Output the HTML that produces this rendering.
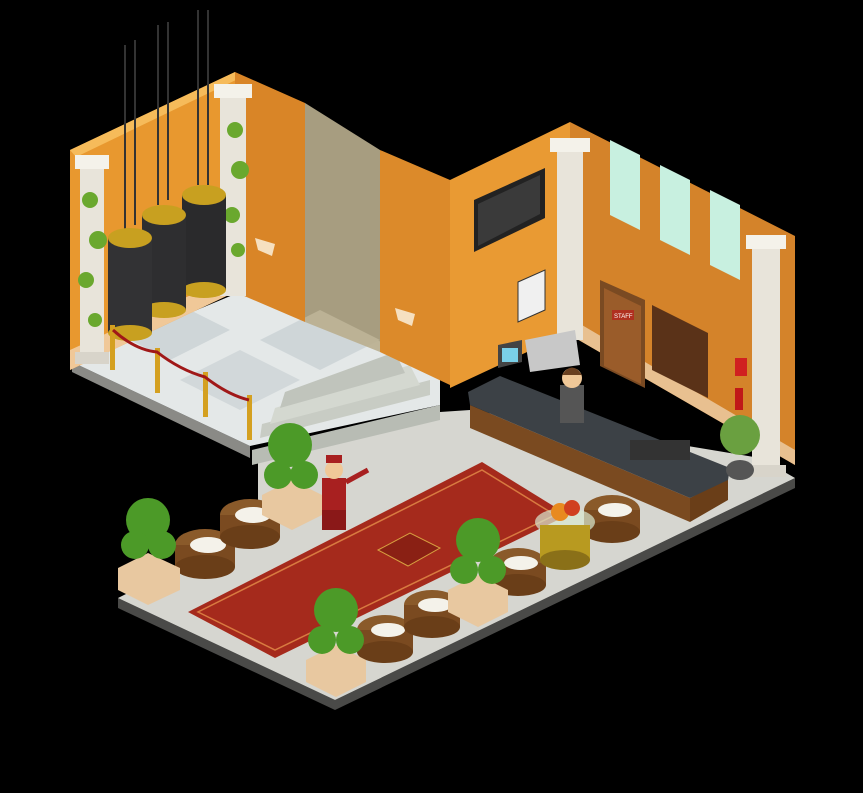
<!DOCTYPE html>
<html><head><meta charset="utf-8"><style>
html,body{margin:0;padding:0;background:#000;width:863px;height:793px;overflow:hidden}
svg{display:block}
</style></head><body>
<svg width="863" height="793" viewBox="0 0 863 793" xmlns="http://www.w3.org/2000/svg">
<rect width="863" height="793" fill="#000"/>
<!-- main floor base edge -->
<polygon points="118,598 335,700 795,478 795,488 335,710 118,608" fill="#4a4a48"/>
<!-- main floor -->
<polygon points="118,598 335,700 795,478 760,458 470,410 440,412 258,458 258,528" fill="#d6d6d0"/>
<!-- left platform side -->
<polygon points="72,362 250,446 250,458 72,372" fill="#8a8a86"/>
<!-- left platform floor -->
<polygon points="72,362 250,446 440,405 440,360 305,318 240,292" fill="#e4e8e8"/>
<polygon points="110,330 170,360 230,330 170,300" fill="#cfd6d8"/>
<polygon points="180,380 240,410 300,380 240,350" fill="#d2d8da"/>
<polygon points="260,340 320,370 380,340 320,310" fill="#cfd6d8"/>
<!-- stairs -->
<polygon points="252,450 440,405 440,420 252,465" fill="#b8bcb4"/>
<polygon points="260,438 430,395 430,380 262,424" fill="#c8ccc4"/>
<polygon points="270,424 420,385 410,365 275,408" fill="#d4d8d0"/>
<polygon points="280,408 405,373 395,352 285,392" fill="#c0c4bc"/>
<!-- walls -->
<polygon points="70,150 235,72 235,292 70,370" fill="#e8982f"/>
<polygon points="70,150 235,72 240,78 76,157" fill="#f6bb5a"/>
<polygon points="235,72 305,103 305,322 235,292" fill="#d98527"/>
<polygon points="305,103 380,150 380,352 305,322" fill="#b9ae8e" opacity="0.9"/>
<polygon points="380,150 450,180 450,385 380,352" fill="#dc8a2a"/>
<polygon points="450,180 570,122 570,332 450,388" fill="#e99a33"/>
<polygon points="570,122 795,236 795,465 570,335" fill="#d4832a"/>
<!-- wall base trim -->
<polygon points="70,350 235,275 235,292 70,370" fill="#f0c898"/>
<polygon points="570,318 795,450 795,465 570,335" fill="#e8c090"/>
<!-- windows on right wall -->
<polygon points="610,140 640,155 640,230 610,215" fill="#c8f0e0"/>
<polygon points="660,165 690,180 690,255 660,240" fill="#c8f0e0"/>
<polygon points="710,190 740,205 740,280 710,265" fill="#c8f0e0"/>
<!-- TV -->
<polygon points="474,200 545,168 545,218 474,252" fill="#222"/>
<polygon points="478,204 540,175 540,214 478,246" fill="#3a3a3a"/>
<!-- certificate -->
<polygon points="518,282 545,270 545,310 518,322" fill="#f0f0f0" stroke="#333"/>
<!-- door -->
<polygon points="600,280 645,300 645,388 600,366" fill="#7a4a22"/>
<polygon points="604,288 641,306 641,384 604,366" fill="#9a5c2a"/>
<rect x="612" y="310" width="22" height="10" fill="#b03020"/>
<text x="614" y="318" font-family="Liberation Sans, sans-serif" font-size="6" fill="#fff">STAFF</text>
<!-- key board -->
<polygon points="652,305 708,333 708,398 652,370" fill="#5a3218"/>
<!-- sign -->
<rect x="735" y="358" width="12" height="18" fill="#d02020"/>
<!-- lamps -->
<polygon points="255,238 275,244 272,256 258,250" fill="#f6e0c0"/>
<polygon points="395,308 415,314 412,326 398,320" fill="#f6e0c0"/>
<!-- pillars -->
<rect x="80" y="168" width="24" height="195" fill="#e8e4da"/>
<rect x="75" y="155" width="34" height="14" fill="#f4f2ea"/>
<rect x="75" y="352" width="34" height="12" fill="#d8d4ca"/>
<rect x="220" y="96" width="26" height="200" fill="#e8e4da"/>
<rect x="214" y="84" width="38" height="14" fill="#f4f2ea"/>
<rect x="557" y="150" width="26" height="190" fill="#e8e4da"/>
<rect x="550" y="138" width="40" height="14" fill="#f4f2ea"/>
<rect x="752" y="248" width="28" height="222" fill="#e8e4da"/>
<rect x="746" y="235" width="40" height="14" fill="#f4f2ea"/>
<rect x="746" y="465" width="40" height="12" fill="#d8d4ca"/>
<!-- ivy -->
<g fill="#6aa82e">
<circle cx="90" cy="200" r="8"/><circle cx="98" cy="240" r="9"/><circle cx="86" cy="280" r="8"/><circle cx="95" cy="320" r="7"/>
<circle cx="235" cy="130" r="8"/><circle cx="240" cy="170" r="9"/><circle cx="232" cy="215" r="8"/><circle cx="238" cy="250" r="7"/>
</g>
<!-- chains -->
<g stroke="#333" stroke-width="2">
<line x1="125" y1="45" x2="125" y2="230"/><line x1="135" y1="40" x2="135" y2="225"/>
<line x1="158" y1="25" x2="158" y2="205"/><line x1="168" y1="22" x2="168" y2="200"/>
<line x1="198" y1="10" x2="198" y2="185"/><line x1="208" y1="10" x2="208" y2="185"/>
</g>
<!-- elevators -->
<g>
<rect x="182" y="195" width="44" height="95" fill="#2a2a2c"/><ellipse cx="204" cy="195" rx="22" ry="10" fill="#c8a020"/><ellipse cx="204" cy="290" rx="22" ry="8" fill="#c8a020"/>
<rect x="142" y="215" width="44" height="95" fill="#2e2e30"/><ellipse cx="164" cy="215" rx="22" ry="10" fill="#c8a020"/><ellipse cx="164" cy="310" rx="22" ry="8" fill="#c8a020"/>
<rect x="108" y="238" width="44" height="95" fill="#323234"/><ellipse cx="130" cy="238" rx="22" ry="10" fill="#c8a020"/><ellipse cx="130" cy="333" rx="22" ry="8" fill="#c8a020"/>
</g>
<!-- rope posts -->
<g fill="#d4a020"><rect x="110" y="325" width="5" height="45"/><rect x="155" y="348" width="5" height="45"/><rect x="203" y="372" width="5" height="45"/><rect x="247" y="395" width="5" height="45"/></g>
<path d="M113,330 Q135,350 157,352 Q180,370 205,377 Q228,395 249,400" stroke="#a01818" stroke-width="3" fill="none"/>
<!-- reception desk -->
<polygon points="470,405 690,498 690,522 470,428" fill="#7a4a20"/>
<polygon points="690,498 728,478 728,500 690,522" fill="#6a3e18"/>
<polygon points="468,392 500,376 730,468 728,480 690,498 470,405" fill="#3c4146"/>
<!-- printer & monitor -->
<polygon points="525,340 575,330 580,365 530,372" fill="#c8c8c8"/>
<polygon points="498,345 522,340 522,362 498,368" fill="#444"/>
<rect x="502" y="348" width="16" height="14" fill="#7ad0e8"/>
<!-- receptionist -->
<rect x="560" y="385" width="24" height="38" fill="#555"/>
<circle cx="572" cy="378" r="10" fill="#f0c898"/>
<path d="M562,375 Q572,360 582,375" fill="#6a4020"/>
<!-- register -->
<rect x="630" y="440" width="60" height="20" fill="#333"/>
<!-- fire extinguisher -->
<rect x="735" y="388" width="8" height="22" fill="#c01818"/>
<!-- flower pot -->
<circle cx="740" cy="435" r="20" fill="#6aa040"/>
<ellipse cx="740" cy="470" rx="14" ry="10" fill="#555"/>
<!-- carpet -->
<polygon points="188,612 275,658 568,515 482,462" fill="#a52a1c"/>
<polygon points="198,612 275,650 555,515 482,470" fill="none" stroke="#d87a40" stroke-width="1.5"/>
<polygon points="378,550 410,533 440,548 408,566" fill="#8a2014" stroke="#d8a040"/>
<!-- chairs -->
<g>
<ellipse cx="205" cy="545" rx="30" ry="16" fill="#8a5a2a"/><rect x="175" y="545" width="60" height="22" fill="#7a4a20"/><ellipse cx="205" cy="567" rx="30" ry="12" fill="#6a3e18"/><ellipse cx="208" cy="545" rx="18" ry="8" fill="#f4f2ea"/>
<ellipse cx="250" cy="515" rx="30" ry="16" fill="#8a5a2a"/><rect x="220" y="515" width="60" height="22" fill="#7a4a20"/><ellipse cx="250" cy="537" rx="30" ry="12" fill="#6a3e18"/><ellipse cx="253" cy="515" rx="18" ry="8" fill="#f4f2ea"/>
<ellipse cx="385" cy="630" rx="28" ry="15" fill="#8a5a2a"/><rect x="357" y="630" width="56" height="22" fill="#7a4a20"/><ellipse cx="385" cy="652" rx="28" ry="11" fill="#6a3e18"/><ellipse cx="388" cy="630" rx="17" ry="7" fill="#f4f2ea"/>
<ellipse cx="432" cy="605" rx="28" ry="15" fill="#8a5a2a"/><rect x="404" y="605" width="56" height="22" fill="#7a4a20"/><ellipse cx="432" cy="627" rx="28" ry="11" fill="#6a3e18"/><ellipse cx="435" cy="605" rx="17" ry="7" fill="#f4f2ea"/>
<ellipse cx="518" cy="563" rx="28" ry="15" fill="#8a5a2a"/><rect x="490" y="563" width="56" height="22" fill="#7a4a20"/><ellipse cx="518" cy="585" rx="28" ry="11" fill="#6a3e18"/><ellipse cx="521" cy="563" rx="17" ry="7" fill="#f4f2ea"/>
<ellipse cx="612" cy="510" rx="28" ry="15" fill="#8a5a2a"/><rect x="584" y="510" width="56" height="22" fill="#7a4a20"/><ellipse cx="612" cy="532" rx="28" ry="11" fill="#6a3e18"/><ellipse cx="615" cy="510" rx="17" ry="7" fill="#f4f2ea"/>
</g>
<!-- fruit table -->
<ellipse cx="565" cy="522" rx="30" ry="14" fill="#d8e8d0" opacity="0.7"/>
<rect x="540" y="525" width="50" height="35" fill="#b89a20"/>
<ellipse cx="565" cy="560" rx="25" ry="10" fill="#8a7018"/>
<circle cx="560" cy="512" r="9" fill="#e88a20"/><circle cx="572" cy="508" r="8" fill="#d04020"/>
<!-- planters -->
<g>
<polygon points="118,568 148,553 180,568 180,590 148,605 118,590" fill="#e8c8a0"/>
<g fill="#4c9a28"><circle cx="148" cy="520" r="22"/><circle cx="135" cy="545" r="14"/><circle cx="162" cy="545" r="14"/></g>
<polygon points="262,495 292,480 322,495 322,515 292,530 262,515" fill="#e8c8a0"/>
<g fill="#4c9a28"><circle cx="290" cy="445" r="22"/><circle cx="278" cy="475" r="14"/><circle cx="304" cy="475" r="14"/></g>
<polygon points="306,660 336,645 366,660 366,682 336,697 306,682" fill="#e8c8a0"/>
<g fill="#4c9a28"><circle cx="336" cy="610" r="22"/><circle cx="322" cy="640" r="14"/><circle cx="350" cy="640" r="14"/></g>
<polygon points="448,590 478,575 508,590 508,612 478,627 448,612" fill="#e8c8a0"/>
<g fill="#4c9a28"><circle cx="478" cy="540" r="22"/><circle cx="464" cy="570" r="14"/><circle cx="492" cy="570" r="14"/></g>
</g>
<!-- bellboy -->
<rect x="322" y="478" width="24" height="35" fill="#a82020"/>
<rect x="322" y="510" width="24" height="20" fill="#8a1818"/>
<circle cx="334" cy="470" r="9" fill="#f0c898"/>
<rect x="326" y="455" width="16" height="8" fill="#a82020"/>
<line x1="346" y1="482" x2="368" y2="470" stroke="#a82020" stroke-width="5"/>
</svg>
</body></html>
